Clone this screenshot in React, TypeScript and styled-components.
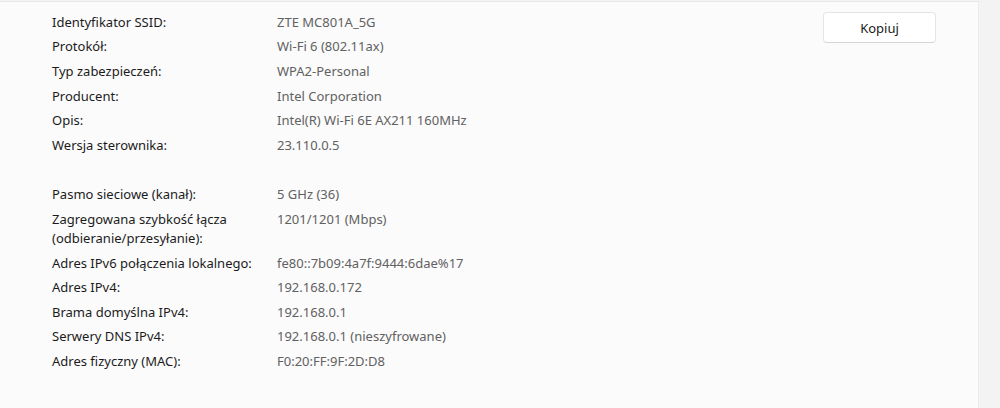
import styled, { createGlobalStyle } from 'styled-components';

const GlobalStyle = createGlobalStyle`
  html, body {
    margin: 0;
    padding: 0;
    background: #f3f3f3;
  }
  body {
    font-family: 'Segoe UI', 'Noto Sans', 'Open Sans', sans-serif;
  }
`;

interface IRow {
  label: string;
  value: string;
}

const firstGroup: IRow[] = [
  { label: 'Identyfikator SSID:', value: 'ZTE MC801A_5G' },
  { label: 'Protokół:', value: 'Wi-Fi 6 (802.11ax)' },
  { label: 'Typ zabezpieczeń:', value: 'WPA2-Personal' },
  { label: 'Producent:', value: 'Intel Corporation' },
  { label: 'Opis:', value: 'Intel(R) Wi-Fi 6E AX211 160MHz' },
  { label: 'Wersja sterownika:', value: '23.110.0.5' },
];

const secondGroup: IRow[] = [
  { label: 'Pasmo sieciowe (kanał):', value: '5 GHz (36)' },
  {
    label: 'Zagregowana szybkość łącza (odbieranie/przesyłanie):',
    value: '1201/1201 (Mbps)',
  },
  {
    label: 'Adres IPv6 połączenia lokalnego:',
    value: 'fe80::7b09:4a7f:9444:6dae%17',
  },
  { label: 'Adres IPv4:', value: '192.168.0.172' },
  { label: 'Brama domyślna IPv4:', value: '192.168.0.1' },
  { label: 'Serwery DNS IPv4:', value: '192.168.0.1 (nieszyfrowane)' },
  { label: 'Adres fizyczny (MAC):', value: 'F0:20:FF:9F:2D:D8' },
];

function App(): React.ReactElement {
  return (
    <>
      <GlobalStyle />
      <Wrapper>
        <Panel>
          <Details>
            <Group>
              {firstGroup.map((row) => (
                <Row key={row.label}>
                  <Label>{row.label}</Label>
                  <Value>{row.value}</Value>
                </Row>
              ))}
            </Group>
            <Group>
              {secondGroup.map((row) => (
                <Row key={row.label}>
                  <Label>{row.label}</Label>
                  <Value>{row.value}</Value>
                </Row>
              ))}
            </Group>
          </Details>
          <CopyButton>Kopiuj</CopyButton>
        </Panel>
        <Scrollbar />
      </Wrapper>
    </>
  );
}

const Wrapper = styled.div`
  display: grid;
  grid-template-columns: 1fr 21px;
  width: 1000px;
  height: 408px;
  overflow: hidden;
`;

const Panel = styled.div`
  display: flex;
  justify-content: space-between;
  align-items: flex-start;
  margin-top: 1px;
  border-top: 1px solid #e8e8e8;
  border-right: 1px solid #ececec;
  background: #fbfbfb;
  padding: 8px 42px 0 52px;
`;

const Details = styled.div`
  display: flex;
  flex-direction: column;
  gap: 25px;
`;

const Group = styled.div`
  display: flex;
  flex-direction: column;
`;

const Row = styled.div`
  display: grid;
  grid-template-columns: 225px auto;
  padding: 2.8px 0;
  font-size: 13px;
  line-height: 19px;
`;

const Label = styled.div`
  color: #1b1b1b;
  padding-right: 18px;
`;

const Value = styled.div`
  color: #616161;
`;

const CopyButton = styled.button`
  width: 113px;
  height: 31px;
  margin-top: 2px;
  background: #ffffff;
  border: 1px solid #e5e5e5;
  border-bottom-color: #d6d6d6;
  border-radius: 4px;
  font-family: inherit;
  font-size: 13px;
  color: #1b1b1b;
  padding: 0;
`;

const Scrollbar = styled.div`
  background: #f3f3f3;
`;

export default App;
